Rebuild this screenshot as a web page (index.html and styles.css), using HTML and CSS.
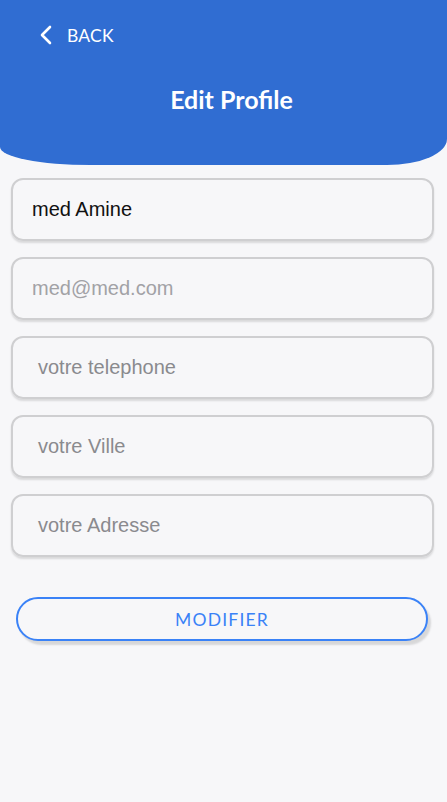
FILE: index.html
```html
<!DOCTYPE html>
<html>
<head>
<meta charset="utf-8">
<link rel="stylesheet" href="styles.css">
</head>
<body>
<header class="header">
  <div class="back">
    <svg class="chev" width="14" height="20" viewBox="0 0 14 20"><path d="M11 2 L3 10 L11 18" fill="none" stroke="#fff" stroke-width="2.6" stroke-linecap="round" stroke-linejoin="round"/></svg>
    <span>BACK</span>
  </div>
  <h1 class="title">Edit Profile</h1>
</header>
<main class="form">
  <div class="field"><span class="val">med Amine</span></div>
  <div class="field"><span class="ph">med@med.com</span></div>
  <div class="field wide"><span class="ph">votre telephone</span></div>
  <div class="field wide"><span class="ph">votre Ville</span></div>
  <div class="field wide"><span class="ph">votre Adresse</span></div>
  <button class="btn">MODIFIER</button>
</main>
</body>
</html>
```
FILE: styles.css
```css
html, body { margin: 0; padding: 0; }
body { background: #f7f7f9; width: 447px; height: 802px; overflow: hidden; font-family: "Liberation Sans", Arial, sans-serif; }
.header {
  background: #306dd2;
  height: 165px;
  border-bottom-left-radius: 90px 18px;
  border-bottom-right-radius: 60px 26px;
  color: #fff;
  font-family: Lato, sans-serif;
  display: flex; flex-direction: column;
  box-sizing: border-box;
  padding-top: 24px;
}
.back { display: flex; align-items: center; margin-left: 39px; gap: 14px; height: 22px; }
.chev { display: block; }
.back span { font-size: 17.5px; letter-spacing: 0.2px; }
.title { margin: 38px 0 0; text-align: center; font-size: 25px; font-weight: 700; line-height: 30px; letter-spacing: 0px; padding-left: 16px; }
.form { display: flex; flex-direction: column; padding: 13px 13px 0 11px; gap: 16px; }
.field {
  height: 63px; box-sizing: border-box;
  border: 2px solid #cfcfd1; border-radius: 12px;
  box-shadow: 0 2px 2px rgba(0,0,0,0.12);
  display: flex; align-items: center; padding-left: 19px;
  font-size: 20px;
}
.field.wide { padding-left: 25px; }
.val { color: #111; }
.ph { color: #8a8a8e; }
.field:nth-child(2) .ph { color: #a2a2a6; }
.btn {
  margin: 24px 6px 0 5px; height: 44px;
  border: 2px solid #3a82f7; border-radius: 22px;
  background: #f7f7f9; color: #3a82f7;
  font-family: Lato, sans-serif; font-size: 17.5px; letter-spacing: 1.2px;
  box-shadow: 3px 4px 2px rgba(0,0,0,0.13);
}
```
